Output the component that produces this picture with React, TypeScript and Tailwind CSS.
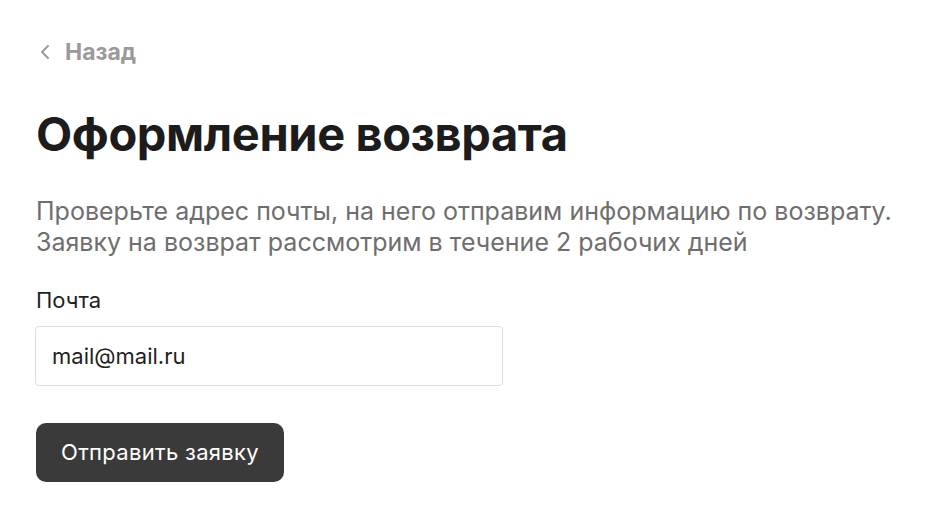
import { useState } from 'react';

const ReturnForm = () => {
  const [email, setEmail] = useState('mail@mail.ru');

  return (
    <div className="min-h-screen bg-white px-9 pt-[38px] font-['Inter',sans-serif] text-[#1f1f1f]">
      <a href="#" className="flex h-7 items-center text-[23px] font-bold text-[#9a9a9a]">
        <svg width="12" height="18" viewBox="0 0 12 18" fill="none" className="ml-[3px] mr-[14px]">
          <path d="M9 3L3 9l6 6" stroke="#9a9a9a" strokeWidth="2" strokeLinecap="round" strokeLinejoin="round" />
        </svg>
        Назад
      </a>

      <h1 className="mt-[42px] text-[47px] leading-[52px] font-bold tracking-[-0.4px] text-[#1c1c1c]">
        Оформление возврата
      </h1>

      <p className="mt-9 text-[25px] leading-[31px] text-[#6e6e6e]">
        Проверьте адрес почты, на него отправим информацию по возврату.
        <br />
        Заявку на возврат рассмотрим в течение 2 рабочих дней
      </p>

      <label className="mt-[30px] block text-[22px] leading-6 text-[#1f1f1f]">Почта</label>
      <input
        value={email}
        onChange={(e) => setEmail(e.target.value)}
        className="mt-[14px] -ml-px h-[60px] w-[468px] rounded-[4px] border border-[#dcdcdc] pl-4 text-[22px] text-[#1f1f1f] outline-none"
      />

      <div className="mt-[37px]">
        <button className="h-[59px] w-[248px] rounded-[10px] bg-[#3a3a3a] text-[22px] tracking-[0.3px] text-white">
          Отправить заявку
        </button>
      </div>
    </div>
  );
};

export default function App() {
  return <ReturnForm />;
}
